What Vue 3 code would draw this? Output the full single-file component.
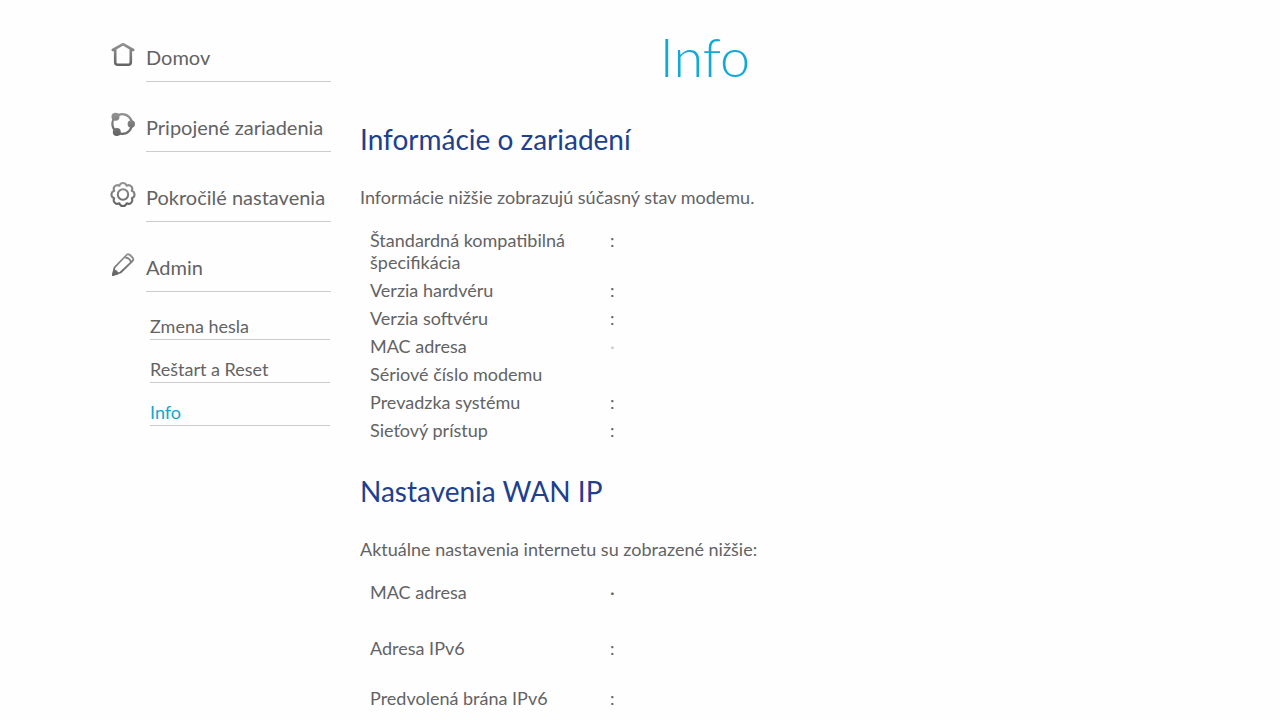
<script setup>
const menu = [
  { id: 'home', label: 'Domov' },
  { id: 'devices', label: 'Pripojené zariadenia' },
  { id: 'settings', label: 'Pokročilé nastavenia' },
  { id: 'admin', label: 'Admin' },
]
const submenu = [
  { label: 'Zmena hesla' },
  { label: 'Reštart a Reset' },
  { label: 'Info', active: true },
]
const sections = [
  {
    title: 'Informácie o zariadení',
    intro: 'Informácie nižšie zobrazujú súčasný stav modemu.',
    rows: [
      { label: 'Štandardná kompatibilná špecifikácia', sep: ':' },
      { label: 'Verzia hardvéru', sep: ':' },
      { label: 'Verzia softvéru', sep: ':' },
      { label: 'MAC adresa', sep: '·', tone: 'faded' },
      { label: 'Sériové číslo modemu', sep: '' },
      { label: 'Prevadzka systému', sep: ':' },
      { label: 'Sieťový prístup', sep: ':' },
    ],
  },
  {
    title: 'Nastavenia WAN IP',
    intro: 'Aktuálne nastavenia internetu su zobrazené nižšie:',
    rows: [
      { label: 'MAC adresa', sep: '·', size: 'tall' },
      { label: 'Adresa IPv6', sep: ':', size: 'double' },
      { label: 'Predvolená brána IPv6', sep: ':' },
    ],
  },
]
</script>

<template>
  <div class="page">
    <nav class="sidebar">
      <ul class="menu">
        <li v-for="item in menu" :key="item.id" class="menu-item">
          <svg class="icon" viewBox="0 0 28 28" aria-hidden="true">
            <defs>
              <linearGradient :id="'tone-' + item.id" gradientUnits="userSpaceOnUse" x1="0" y1="2" x2="0" y2="26">
                <stop offset="0" stop-color="#949494" />
                <stop offset="1" stop-color="#606060" />
              </linearGradient>
            </defs>
            <g :stroke="`url(#tone-${item.id})`" fill="none" stroke-width="2.600" stroke-linejoin="round" stroke-linecap="round">
              <path v-if="item.id === 'home'" d="M2.800 9 13 3.200l10.200 5.800M5.200 8.500V21.300q0 2.500 2.500 2.500h10.600q2.500 0 2.500-2.500V8.500" />
              <template v-else-if="item.id === 'devices'">
                <circle cx="12.200" cy="13" r="9.800" stroke-width="2.200" />
                <g :fill="`url(#tone-${item.id})`" stroke="none">
                  <circle cx="5.500" cy="5.800" r="4" />
                  <circle cx="21.300" cy="13" r="3.700" />
                  <circle cx="6.800" cy="21" r="4" />
                </g>
              </template>
              <template v-else-if="item.id === 'settings'">
                <circle cx="13" cy="13.500" r="5.200" stroke-width="2" />
                <path stroke-width="2" d="M9.400 4.800A3.700 3.700 0 0 1 16.600 4.800A3.700 3.700 0 0 1 21.700 9.900A3.700 3.700 0 0 1 21.700 17.100A3.700 3.700 0 0 1 16.600 22.200A3.700 3.700 0 0 1 9.400 22.200A3.700 3.700 0 0 1 4.300 17.100A3.700 3.700 0 0 1 4.300 9.900A3.700 3.700 0 0 1 9.400 4.800Z" />
              </template>
              <template v-else>
                <path d="M3 24 4.500 16.500 16.500 4q1.500-1.500 3.500 0l2.500 2.500q1.500 1.800 0 3.500L10.500 21.500ZM15.500 6.500q4.500.500 5.500 5" stroke-width="1.800" />
                <path :fill="`url(#tone-${item.id})`" stroke-width="1.800" d="M3 24 4 19.500q3 .5 3.500 3.200Z" />
              </template>
            </g>
          </svg>
          <a class="menu-link" href="#">{{ item.label }}</a>
        </li>
      </ul>
      <ul class="submenu">
        <li v-for="item in submenu" :key="item.label">
          <a class="submenu-link" :class="{ active: item.active }" href="#">{{ item.label }}</a>
        </li>
      </ul>
    </nav>

    <main class="content">
      <h1>Info</h1>
      <section v-for="section in sections" :key="section.title">
        <h2>{{ section.title }}</h2>
        <p>{{ section.intro }}</p>
        <table>
          <tbody>
            <tr v-for="row in section.rows" :key="row.label" :class="row.size">
              <th scope="row">{{ row.label }}</th>
              <td :class="row.tone">{{ row.sep }}</td>
            </tr>
          </tbody>
        </table>
      </section>
    </main>
  </div>
</template>

<style>
body {
  background: #fefefe;
}
</style>

<style scoped>
.page {
  display: grid;
  grid-template-columns: 221px minmax(0, 1fr);
  column-gap: 29px;
  padding: 30px 230px 0 110px;
  font-family: Lato, Carlito, "Noto Sans", sans-serif;
  font-size: 18px;
  line-height: 22px;
  color: #636363;
}
ul {
  margin: 0;
  padding: 0;
  list-style: none;
}
.menu-item {
  display: flex;
  gap: 8px;
  height: 52px;
  margin-bottom: 18px;
}
.icon {
  flex: none;
  width: 28px;
  height: 28px;
  margin-top: 11px;
}
a {
  color: inherit;
  text-decoration: none;
  white-space: nowrap;
}
.menu-link {
  flex: 1;
  box-sizing: border-box;
  padding-top: 15px;
  border-bottom: 1px solid #cccccc;
  font-size: 20px;
  line-height: 24px;
}
.submenu {
  margin: 23px 1px 0 40px;
}
.submenu-link {
  display: block;
  margin-bottom: 18px;
  padding-bottom: 2px;
  border-bottom: 1px solid #cccccc;
}
.submenu-link.active {
  color: #13a5d1;
}
h1 {
  margin: 0 0 38px;
  font-size: 54px;
  font-weight: 300;
  line-height: 54px;
  text-align: center;
  color: #10aad5;
}
h2 {
  margin: 0 0 30px;
  font-size: 28px;
  font-weight: 400;
  line-height: 34px;
  color: #213f8f;
}
p {
  margin: 0 0 18px;
}
section {
  margin-bottom: 30px;
}
table {
  width: 100%;
  border-collapse: collapse;
}
th,
td {
  padding: 3px 10px;
  font-weight: 400;
  text-align: left;
  vertical-align: top;
}
th {
  width: 220px;
}
.tall {
  height: 56px;
}
.double {
  height: 50px;
}
.faded {
  color: #cccccc;
}
</style>
